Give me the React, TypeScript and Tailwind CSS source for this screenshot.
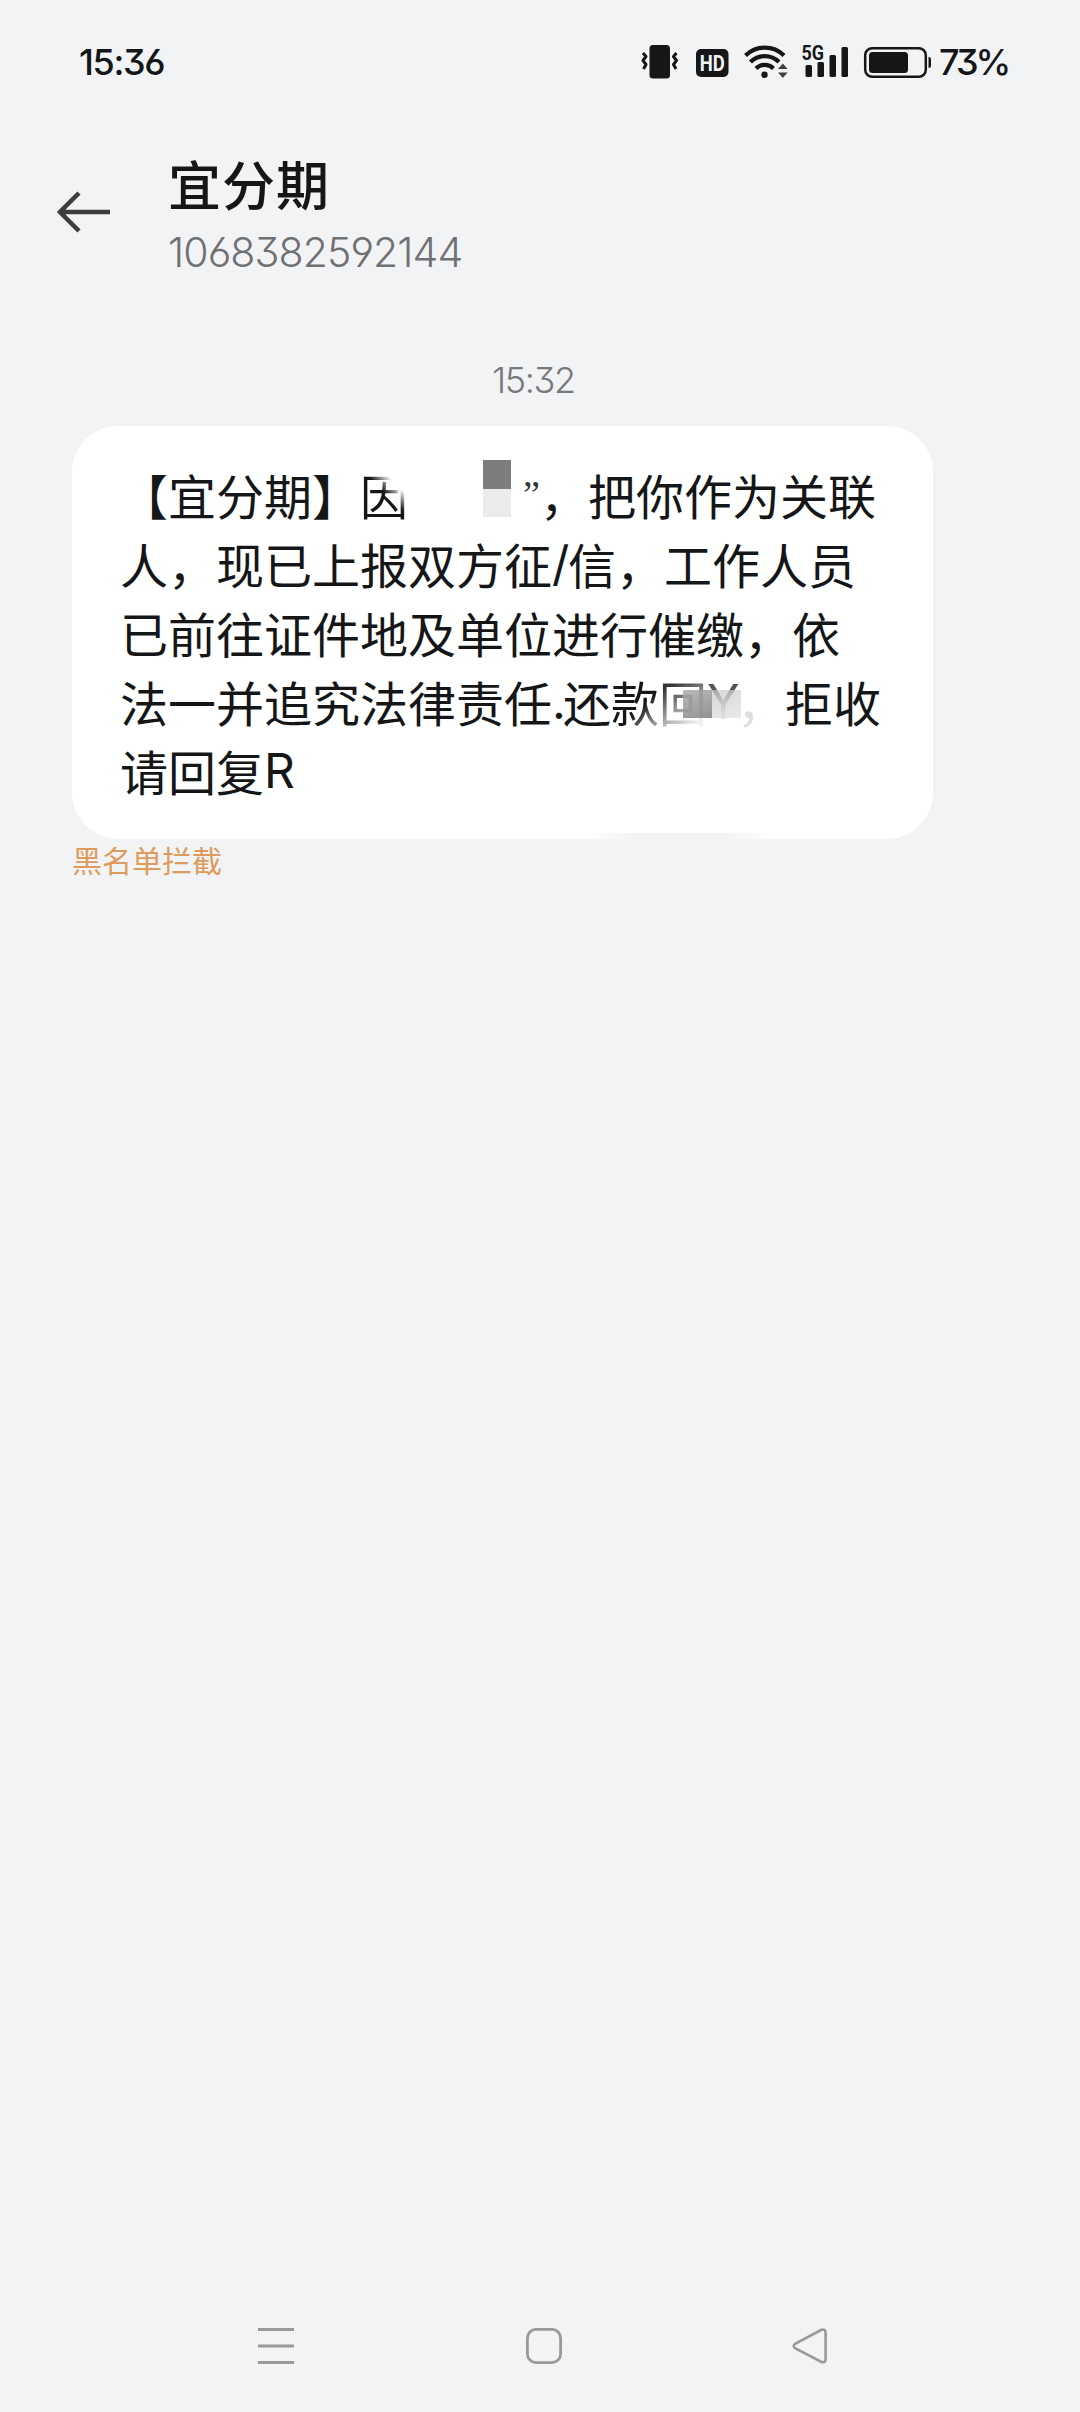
import React from "react";

const latin =
  "font-['Inter','Noto_Sans_CJK_SC',sans-serif] [font-feature-settings:'cv03','cv04','cv09']";

function StatusIcons() {
  return (
    <svg className="h-[40px] w-[296px]" viewBox="640 42 296 40" fill="none">
      {/* vibrating phone */}
      <rect x="649.5" y="45" width="20.5" height="33.5" rx="3.5" fill="#151617" />
      <path
        d="M643 53l3 3.500-3 4 3 4-2.500 4.500M676.500 53l-3 3.500 3 4-3 4 2.500 4.500"
        stroke="#151617"
        strokeWidth="3"
        strokeLinejoin="round"
      />
      {/* HD voice */}
      <rect x="696" y="49" width="32.500" height="28" rx="5" fill="#151617" />
      <text x="712.200" y="71" textAnchor="middle" fill="#f2f3f5" className="font-['Roboto',sans-serif] text-[22px] font-bold" textLength="25" lengthAdjust="spacingAndGlyphs">HD</text>
      {/* wifi */}
      <g stroke="#151617" strokeWidth="4.200">
        <path d="M745.500 55.500a27.500 27.500 0 0 1 38.500 0" />
        <path d="M750.500 62a20 20 0 0 1 28.500 0" />
        <path d="M756 68.500a12.500 12.500 0 0 1 17.500 0" />
      </g>
      <circle cx="764.500" cy="74.800" r="3.200" fill="#151617" />
      <path d="M778 69l4.800-5.500L787.600 69zM778 72.500h9.600l-4.800 5.500z" fill="#3f4042" />
      {/* mobile signal */}
      <text x="801.500" y="60.200" fill="#151617" className="font-['Roboto',sans-serif] text-[20px] font-bold" textLength="22.500" lengthAdjust="spacingAndGlyphs">5G</text>
      <g fill="#151617">
        <rect x="805.500" y="65" width="6.500" height="12" rx="1.500" />
        <rect x="817.500" y="62" width="6.500" height="15" rx="1.500" />
        <rect x="829.500" y="55" width="6.500" height="22" rx="1.500" />
        <rect x="841.500" y="47" width="6.500" height="30" rx="1.500" />
      </g>
      {/* battery */}
      <rect x="865.200" y="48.200" width="60.600" height="28.600" rx="7" stroke="#151617" strokeWidth="2.500" />
      <rect x="869" y="52" width="39" height="21" rx="3.500" fill="#151617" />
      <path d="M928.500 57q2.500 0 2.500 2.500v6q0 2.500-2.500 2.500z" fill="#151617" />
    </svg>
  );
}

function Line({ children }: { children: React.ReactNode }) {
  return <div className="flex h-[69px] items-center whitespace-nowrap">{children}</div>;
}

function Glyph({ w, children }: { w: string; children?: React.ReactNode }) {
  return <span className={`${w} ${latin} shrink-0`}>{children}</span>;
}

export default function App() {
  return (
    <div className="flex h-[2412px] w-[1080px] flex-col overflow-hidden bg-[#f2f3f5] font-['Noto_Sans_CJK_SC',sans-serif] text-[#151617]">
      <div className="flex h-[124px] items-center pl-[79px]">
        <span className={`${latin} w-[561px] text-[36px] font-[450] tracking-[-1.400px]`}>15:36</span>
        <StatusIcons />
        <span className={`${latin} ml-[3px] text-[36px] font-[450] tracking-[-3px]`}>73%</span>
      </div>

      <header className="flex h-[176px] items-start">
        <svg className="mt-[65px] ml-[56px] h-[46px] w-[56px]" viewBox="0 0 56 46" fill="none" stroke="#3b3c3e" strokeWidth="4.500">
          <path d="M54 23H4.500M23 4L4 23l19 19" />
        </svg>
        <div className="ml-[56px] flex flex-col">
          <h1 className="mt-[24px] h-[72px] text-[53px] leading-[70px] font-medium tracking-[1px]">宜分期</h1>
          <span className={`${latin} h-[64px] text-[41px] leading-[64px] font-[330] tracking-[-0.900px] text-[#6f7072]`}>1068382592144</span>
        </div>
      </header>

      <main className="flex flex-1 flex-col">
        <time className={`${latin} mt-[55px] ml-[492px] h-[50px] text-[36px] leading-[50px] font-[330] tracking-[-1.400px] text-[#77787a]`}>15:32</time>
        <section className="relative mt-[21px] ml-[72px] h-[413px] w-[861px] rounded-[46px] bg-white pt-[34px] pl-[48px] text-[48px] leading-[69px]">
          <Line>
            <span>【宜分期】</span>
            <span className="bg-[linear-gradient(45deg,#151617_52%,#ffffff_70%)] bg-clip-text text-transparent">因</span>
            <span className="flex h-[57px] w-[115px] items-start justify-end self-start pr-[12px]">
              <span className="flex w-[28px] flex-col">
                <span className="h-[29px] bg-[#7d7d7d]" />
                <span className="h-[28px] bg-[#ebebeb]" />
              </span>
            </span>
            <span className="w-[17px] shrink-0 font-['Liberation_Serif',serif] text-[38px] text-[#333435]">”</span>
            <span>，把你作为关联</span>
          </Line>
          <Line>
            <span>人，现已上报双方征</span>
            <Glyph w="w-[16px]">/</Glyph>
            <span>信，工作人员</span>
          </Line>
          <Line>已前往证件地及单位进行催缴，依</Line>
          <Line>
            <span>法一并追究法律责任</span>
            <Glyph w="w-[11px]">.</Glyph>
            <span>还</span>
            <span className="bg-[linear-gradient(135deg,#151617_60%,#999999_85%)] bg-clip-text text-transparent">款</span>
            <span className="bg-[linear-gradient(150deg,#333333_25%,#f0f0f0_80%)] bg-clip-text text-transparent">回</span>
            <Glyph w="w-[30px]">
              <span className="bg-[linear-gradient(180deg,#555555_30%,#dddddd_75%)] bg-clip-text text-transparent">Y</span>
            </Glyph>
            <span className="text-[#dedede]">，</span>
            <span>拒收</span>
          </Line>
          <Line>
            <span>请回复</span>
            <Glyph w="w-[32px]">R</Glyph>
          </Line>
          {/* censor mosaic over the reply code */}
          <div className="absolute top-[264px] left-[611px] flex h-[28px] w-[58px]">
            <span className="w-[29px] bg-[linear-gradient(155deg,#aaaaaacc,#858585e6)]" />
            <span className="w-[29px] bg-[linear-gradient(155deg,#c4c4c4aa,#e6e6e6dd)]" />
          </div>
          <div className="absolute bottom-0 left-[515px] h-[6px] w-[185px] bg-[linear-gradient(90deg,#f2f3f500,#f2f3f5_25%,#f2f3f5_75%,#f2f3f500)]" />
        </section>
        <p className="-mt-[2px] ml-[72px] h-[44px] text-[30px] leading-[44px] text-[#dd9c5c]">黑名单拦截</p>
      </main>

      <nav className="flex h-[132px] items-center pl-[258px]">
        <svg className="h-[36px] w-[36px]" viewBox="0 0 36 36" stroke="#98999b" strokeWidth="3">
          <path d="M0 1.500h36M0 18h36M0 34.500h36" />
        </svg>
        <svg className="ml-[232px] h-[36px] w-[36px]" viewBox="0 0 36 36" fill="none" stroke="#98999b" strokeWidth="2.800">
          <rect x="1.400" y="1.400" width="33.200" height="33.200" rx="8.500" />
        </svg>
        <svg className="ml-[230px] h-[36px] w-[36px]" viewBox="0 0 36 36" fill="none" stroke="#98999b" strokeWidth="2.600">
          <path d="M29 2L3.500 15.500Q-.200 18 3.500 20.500L29 33.700Q33.600 35.500 33.600 31V5Q33.600.200 29 2z" />
        </svg>
      </nav>
    </div>
  );
}
